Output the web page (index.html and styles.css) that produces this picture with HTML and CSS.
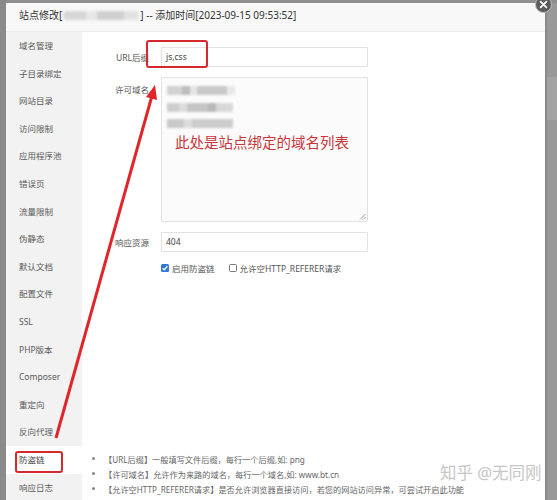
FILE: index.html
```html
<!DOCTYPE html>
<html lang="zh-CN">
<head>
<meta charset="utf-8">
<title>站点修改</title>
<link rel="stylesheet" href="styles.css">
</head>
<body>
<div class="stage">
  <div class="dialog">
    <div class="dlg-head">
      <span class="title">站点修改[<span class="blur-name"></span>] -- 添加时间[2023-09-15 09:53:52]</span>
    </div>
    <div class="dlg-body">
      <ul class="side">
        <li>域名管理</li>
        <li>子目录绑定</li>
        <li>网站目录</li>
        <li>访问限制</li>
        <li>应用程序池</li>
        <li>错误页</li>
        <li>流量限制</li>
        <li>伪静态</li>
        <li>默认文档</li>
        <li>配置文件</li>
        <li>SSL</li>
        <li>PHP版本</li>
        <li>Composer</li>
        <li>重定向</li>
        <li>反向代理</li>
        <li class="active">防盗链</li>
        <li>响应日志</li>
      </ul>
      <div class="main">
        <div class="form">
          <div class="row">
            <span class="label">URL后缀</span>
            <div class="field input">js,css</div>
          </div>
          <div class="row">
            <span class="label label-top">许可域名</span>
            <div class="field area">
              <div class="blur-line"><span class="blob b1"></span></div>
              <div class="blur-line"><span class="blob b2"></span></div>
              <div class="blur-line"><span class="blob b3"></span></div>
              <div class="note">此处是站点绑定的域名列表</div>
              <svg class="grip" width="7" height="7" viewBox="0 0 7 7"><path d="M6.5 1 L1 6.5 M6.5 4 L4 6.5" stroke="#999" stroke-width="0.9" fill="none"/></svg>
            </div>
          </div>
          <div class="row row-gap">
            <span class="label">响应资源</span>
            <div class="field input">404</div>
          </div>
          <div class="checks">
            <span class="cb on"><svg width="8" height="8" viewBox="0 0 8 8"><path d="M1.6 4.2 L3.3 5.8 L6.4 2.3" stroke="#fff" stroke-width="1.3" fill="none"/></svg></span>
            <span class="cb-text">启用防盗链</span>
            <span class="cb off"></span>
            <span class="cb-text">允许空HTTP_REFERER请求</span>
          </div>
        </div>
        <ul class="tips">
          <li>【URL后缀】一般填写文件后缀，每行一个后缀,如: png</li>
          <li>【许可域名】允许作为来路的域名，每行一个域名,如: www.bt.cn</li>
          <li>【允许空HTTP_REFERER请求】是否允许浏览器直接访问，若您的网站访问异常，可尝试开启此功能</li>
        </ul>
      </div>
    </div>
  </div>
  <span class="close"><svg width="17" height="17" viewBox="0 0 17 17"><circle cx="8.5" cy="8.5" r="8" fill="#5c5c5c" stroke="#bdbdbd" stroke-width="1"/><path d="M5.6 5.6 L11.4 11.4 M11.4 5.6 L5.6 11.4" stroke="#fff" stroke-width="1.7" stroke-linecap="round"/></svg></span>
  <svg class="annot" width="557" height="500" viewBox="0 0 557 500">
    <rect x="147" y="41" width="60" height="26" rx="2" fill="none" stroke="#d7282d" stroke-width="2"/>
    <rect x="16" y="452" width="46" height="20" rx="2" fill="none" stroke="#d7282d" stroke-width="2"/>
    <line x1="56" y1="438" x2="151.5" y2="97.5" stroke="#e0262b" stroke-width="3"/>
    <polygon points="155,85 157,100 146,97" fill="#e0262b"/>
  </svg>
  <div class="watermark">知乎 @无同刚</div>
</div>
</body>
</html>
```

FILE: styles.css
```css
* { box-sizing: border-box; }
html, body { margin: 0; padding: 0; }
body {
  font-family: "Noto Sans", "Noto Sans CJK SC", sans-serif;
  background: #979797;
}
.stage {
  position: relative;
  width: 557px;
  height: 500px;
  overflow: hidden;
  background:
    linear-gradient(90deg, #8a8a8a 0 6px, transparent 6px),
    linear-gradient(180deg, #8f8f8f 0 3px, transparent 3px),
    linear-gradient(90deg, transparent 545px, #8a8a8a 545px 547px, transparent 547px),
    linear-gradient(180deg, transparent 77px, #a3a3a3 77px 120px, transparent 120px),
    #989898;
}
.dialog {
  margin: 3px 0 0 6px;
  width: 539px;
  height: 497px;
  background: #fff;
  overflow: hidden;
}
.dlg-head {
  height: 29px;
  background: #f8f8f8;
  border-bottom: 1px solid #ebebeb;
  padding-left: 13px;
  line-height: 25px;
  font-size: 10px;
  color: #333;
}
.blur-name {
  display: inline-block;
  width: 76px;
  height: 9px;
  margin: 0 1px;
  vertical-align: -1px;
  border-radius: 4px;
  background: linear-gradient(90deg, #d6d6d6 0 30%, #e6e6e6 30% 45%, #cfcfcf 45% 80%, #e2e2e2 80%);
  filter: blur(1.5px);
}
.dlg-body {
  display: flex;
  height: 468px;
}
.side {
  list-style: none;
  margin: 0;
  padding: 0;
  width: 76px;
  flex: none;
  background: #f2f2f2;
}
.side li {
  height: 27.6px;
  line-height: 27.6px;
  padding-left: 13px;
  font-size: 8.5px;
  color: #5a5a5a;
  white-space: nowrap;
}
.side li.active { background: #fff; color: #444; }
.main {
  flex: 1;
  padding-top: 15px;
}
.row {
  display: flex;
  align-items: center;
  margin-bottom: 10px;
}
.row-gap { margin-top: 4px; }
.label {
  width: 67px;
  text-align: right;
  margin-right: 12px;
  font-size: 8.5px;
  color: #555;
  flex: none;
}
.label-top { align-self: flex-start; padding-top: 6px; }
.field {
  width: 207px;
  border: 1px solid #e2e2e2;
  border-radius: 1px;
  font-size: 8.5px;
  color: #444;
}
.input {
  height: 20px;
  line-height: 18px;
  padding-left: 4px;
}
.area {
  position: relative;
  height: 145px;
  background: #fbfbfb;
  padding: 4px 0 0 5px;
}
.blur-line {
  height: 16.7px;
  display: flex;
  align-items: center;
}
.blob {
  display: block;
  height: 9px;
  filter: blur(1px);
}
.b1 { width: 68px; background: linear-gradient(90deg, #d2d2d2 0 22%, #bdbdbd 22% 34%, #e4e4e4 34% 44%, #c9c9c9 44% 88%, #e8e8e8 88%); }
.b2 { width: 66px; background: linear-gradient(90deg, #cdcdcd 0 18%, #dcdcdc 18% 30%, #c5c5c5 30% 62%, #b9b9b9 62% 74%, #d8d8d8 74%); }
.b3 { width: 66px; background: linear-gradient(90deg, #c9c9c9 0 26%, #dedede 26% 38%, #cccccc 38% 100%); }
.note {
  margin: 2px 0 0 8px;
  font-size: 14.5px;
  line-height: 17px;
  color: #c8353a;
  white-space: nowrap;
}
.grip { position: absolute; right: 1px; bottom: 1px; }
.checks {
  display: flex;
  align-items: center;
  margin-left: 79px;
  height: 12px;
}
.cb {
  width: 8px;
  height: 8px;
  border-radius: 1.5px;
  flex: none;
  display: flex;
}
.cb.on { background: #2f78d8; }
.cb.off { border: 1px solid #777; background: #fff; margin-left: 14px; }
.cb-text {
  margin-left: 3px;
  font-size: 8.5px;
  color: #555;
}
.tips {
  list-style: none;
  margin: 177px 0 0 0;
  padding: 0 0 0 10px;
}
.tips li {
  display: flex;
  align-items: center;
  height: 15px;
  font-size: 8.2px;
  color: #666;
  white-space: nowrap;
}
.tips li::before {
  content: "";
  width: 3px;
  height: 3px;
  border-radius: 50%;
  background: #888;
  margin-right: 9px;
  flex: none;
}
.close {
  position: absolute;
  left: 534.5px;
  top: -4.5px;
  width: 17px;
  height: 17px;
}
.close svg { display: block; }
.annot {
  position: absolute;
  left: 0;
  top: 0;
  pointer-events: none;
}
.watermark {
  position: absolute;
  left: 440px;
  top: 462px;
  font-size: 16.5px;
  line-height: 22px;
  color: #c6c6c6;
  white-space: nowrap;
}
```
